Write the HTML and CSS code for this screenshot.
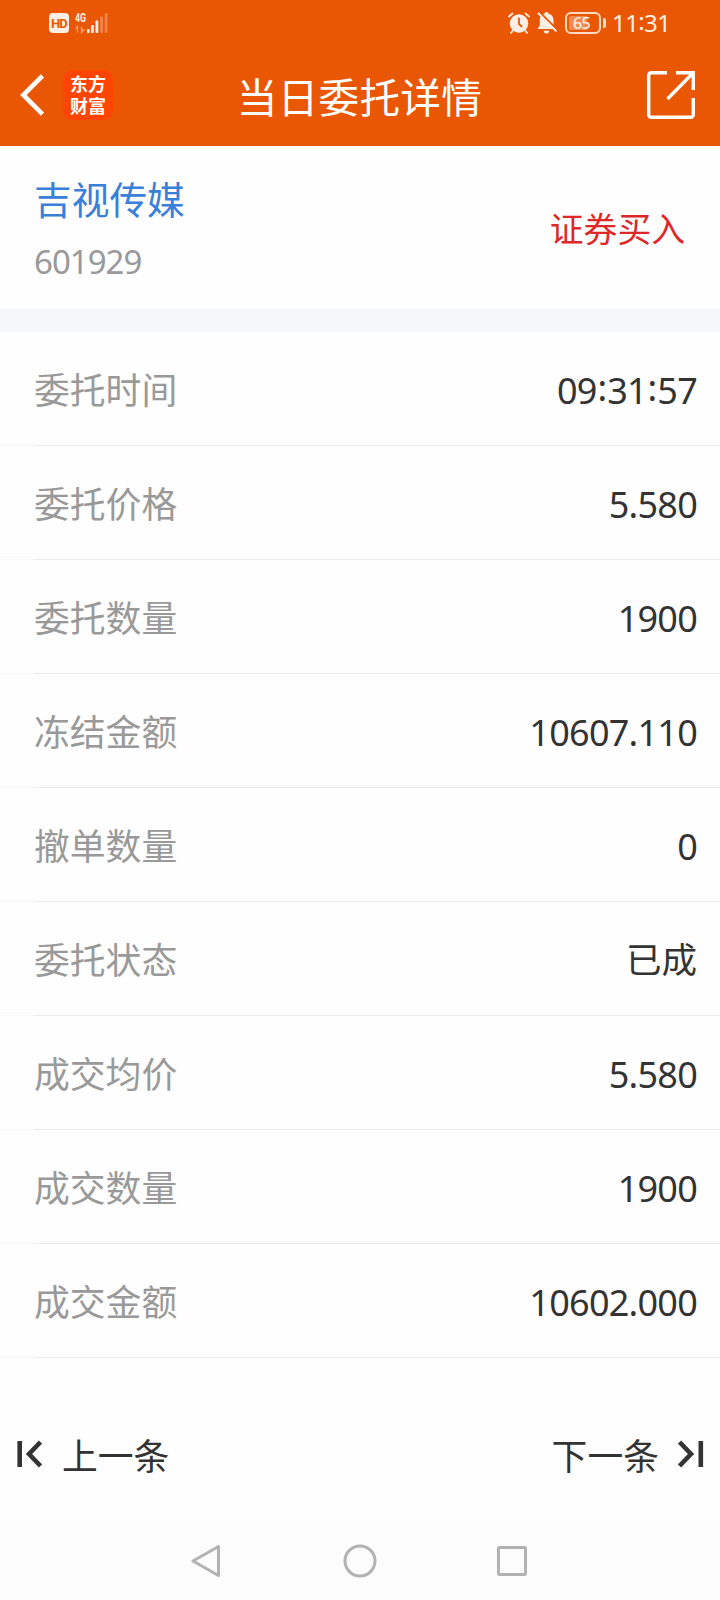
FILE: index.html
```html
<!DOCTYPE html>
<html lang="zh-CN">
<head>
<meta charset="utf-8">
<title>当日委托详情</title>
<link rel="stylesheet" href="styles.css">
</head>
<body>
<header class="top">
  <div class="status">
    <div class="status-left">
      <span class="hd">HD</span>
      <svg class="signal" width="34" height="22" viewBox="0 0 34 22" fill="#ffeee3">
        <text class="net" x="0" y="9.500" textLength="11" lengthAdjust="spacingAndGlyphs">4G</text>
        <path d="M2.500 20.500v-6l-2 2M6.500 14.500v6l2.500-2.500-2.500-1" fill="none" stroke="#ffeee3" stroke-width="1.200" opacity=".5"/>
        <rect x="12" y="17" width="2.600" height="4" rx="1"/>
        <rect x="16" y="13" width="2.800" height="8" rx="1"/>
        <rect x="20.500" y="8.500" width="2.800" height="12.500" rx="1"/>
        <rect x="25.200" y="4.500" width="2.800" height="16.500" rx="1" opacity=".3"/>
        <rect x="29.700" y="1" width="2.800" height="20" rx="1" opacity=".3"/>
      </svg>
    </div>
    <div class="status-right">
      <svg width="22" height="22" viewBox="0 0 22 22" fill="none" stroke-linecap="round">
        <circle cx="11" cy="11.500" r="9.300" fill="#ffeee3"/>
        <path d="M1 4.500L4.500 1.500M21 4.500L17.500 1.500M4.500 19L3 20.800M17.500 19l1.500 1.800" stroke="#ffeee3" stroke-width="1.800"/>
        <path d="M11 6.500v5.500l2.500 2.500" stroke="#ea5704" stroke-width="1.800"/>
      </svg>
      <svg class="bell" width="22" height="22" viewBox="0 0 22 22">
        <path d="M10.500 0c1 0 1.700.7 1.700 1.600 3.300.7 5.300 3.200 5.300 6.400v5.500l2 3.500H1.500l2.300-3.500V8c0-3.200 1.800-5.700 5-6.400C8.800.7 9.500 0 10.500 0zM7.800 18.700h5.400a2.700 2.700 0 0 1-5.400 0z" fill="#ffeee3"/>
        <path d="M3.500 0L22 18.500" stroke="#ea5704" stroke-width="2"/>
        <path d="M2 1L20.500 19.500" stroke="#ffeee3" stroke-width="1.800"/>
      </svg>
      <div class="battery"><span class="charge">65</span></div>
      <span class="clock">11<i class="colon-small">:</i>31</span>
    </div>
  </div>
  <div class="bar">
    <div class="bar-left">
      <svg width="25" height="42" viewBox="0 0 25 42" fill="none" stroke="#fff" stroke-width="4.600"><path d="M22.500 1.800L3.300 21l19.200 19.200"/></svg>
      <div class="logo">东方<br>财富</div>
    </div>
    <h1 class="title">当日委托详情</h1>
    <svg class="share" width="48" height="48" viewBox="0 0 48 48" fill="none" stroke="#fff" stroke-width="3.400"><path d="M20 1.700H4.200a2.500 2.500 0 0 0-2.500 2.500v39.600a2.500 2.500 0 0 0 2.500 2.500h39.600a2.500 2.500 0 0 0 2.500-2.500V27M29 1.700h17.300V19M46 2L20.500 28"/></svg>
  </div>
</header>
<section class="stock">
  <div>
    <div class="name">吉视传媒</div>
    <div class="code">601929</div>
  </div>
  <div class="side">证券买入</div>
</section>
<main class="list">
  <div class="row"><span class="label">委托时间</span><span class="value">09<i class="colon">:</i>31<i class="colon">:</i>57</span></div>
  <div class="row"><span class="label">委托价格</span><span class="value">5.580</span></div>
  <div class="row"><span class="label">委托数量</span><span class="value">1900</span></div>
  <div class="row"><span class="label">冻结金额</span><span class="value">10607.110</span></div>
  <div class="row"><span class="label">撤单数量</span><span class="value">0</span></div>
  <div class="row"><span class="label">委托状态</span><span class="value word">已成</span></div>
  <div class="row"><span class="label">成交均价</span><span class="value">5.580</span></div>
  <div class="row"><span class="label">成交数量</span><span class="value">1900</span></div>
  <div class="row"><span class="label">成交金额</span><span class="value">10602.000</span></div>
</main>
<div class="pager">
  <div class="page-link"><svg width="26" height="28" viewBox="0 0 26 28" fill="none" stroke="#333" stroke-width="4.600"><path d="M3.700 1v26M24.500 2L13 14l11.500 12"/></svg><span>上一条</span></div>
  <div class="page-link"><span>下一条</span><svg width="26" height="28" viewBox="0 0 26 28" fill="none" stroke="#333" stroke-width="4.600"><path d="M22.800 1v26M1.500 2L13 14 1.500 26"/></svg></div>
</div>
<nav class="nav">
  <svg width="34" height="36" viewBox="0 0 34 36"><path d="M27.500 3.500v29L2 18z"/></svg>
  <svg width="34" height="36" viewBox="0 0 34 36"><circle cx="17" cy="18" r="15"/></svg>
  <svg width="34" height="36" viewBox="0 0 34 36"><rect x="3.500" y="4.500" width="27" height="27" rx="1"/></svg>
</nav>
</body>
</html>
```
FILE: styles.css
```css
* { box-sizing: border-box; }
body {
  margin: 0;
  width: 720px;
  height: 1600px;
  display: flex;
  flex-direction: column;
  background: #fefefe;
  color: #333;
  font-family: "Noto Sans CJK SC", sans-serif;
}
svg { display: block; flex: none; }
.top { height: 146px; background: #ea5704; color: #fff; }
.status {
  height: 46px;
  padding: 0 50px 0 49px;
  display: flex;
  justify-content: space-between;
  align-items: center;
  color: #ffeee3;
}
.status-left, .status-right { display: flex; align-items: center; }
.hd {
  width: 20px;
  height: 20px;
  margin-right: 6px;
  border-radius: 4px;
  background: #ffeee3;
  color: #ea5704;
  font: bold 13px/21px Roboto, sans-serif;
  text-align: center;
  letter-spacing: -.8px;
}
.net { font: bold 12px Roboto, sans-serif; }
.bell { margin: 0 7px 0 6px; }
.battery {
  position: relative;
  width: 36px;
  height: 22px;
  padding: 3px;
  border: 2px solid #ffd9c2;
  border-radius: 6px;
}
.battery::after {
  content: "";
  position: absolute;
  left: 36px;
  top: 4px;
  width: 3px;
  height: 10px;
  border-radius: 0 2px 2px 0;
  background: #ffd9c2;
}
.charge {
  display: block;
  width: 28px;
  height: 14px;
  margin: -1px 0 0 -1px;
  border-radius: 2px;
  background: linear-gradient(90deg, #f08a52 65%, transparent 65%);
  font: 500 16px/14px "Noto Sans", sans-serif;
  letter-spacing: -.6px;
  text-align: center;
  padding-right: 3px;
}
.clock {
  width: 58px;
  margin-left: 11px;
  font: 24px/46px "Noto Sans", sans-serif;
  letter-spacing: -.6px;
  text-align: right;
}
.bar {
  height: 100px;
  padding: 0 24px 2px 20px;
  display: grid;
  grid-template-columns: 1fr auto 1fr;
  align-items: center;
}
.bar-left { display: flex; align-items: center; gap: 18px; }
.logo {
  width: 50px;
  height: 50px;
  padding-top: 2px;
  border-radius: 10px;
  background: #ff4500;
  font-size: 18px;
  font-weight: bold;
  line-height: 22px;
  text-align: center;
}
.title { margin: 2px -3px 0 0; font-size: 40.600px; font-weight: 400; line-height: 60px; letter-spacing: .3px; }
.share { justify-self: end; margin-right: 1px; }
.stock {
  height: 186px;
  padding: 22px 35px 0;
  border-bottom: 23px solid #f5f7fa;
  display: flex;
  justify-content: space-between;
}
.name { margin-left: -1px; font-size: 37.700px; line-height: 60px; color: #3880d8; }
.code { margin-left: -1px; font: 33px/68px "Noto Sans", sans-serif; letter-spacing: -1px; color: #999; }
.side { font-size: 33.800px; line-height: 120px; color: #dc2828; }
.row {
  height: 114px;
  padding: 0 23px 0 34px;
  display: flex;
  justify-content: space-between;
  line-height: 112px;
  background: linear-gradient(90deg, #f8f8f8 34px, #ebebeb 34px) bottom / 100% 1px no-repeat;
}
.label { font-size: 35.800px; color: #999; }
.value { font-family: "Noto Sans", sans-serif; font-size: 36px; line-height: 117px; letter-spacing: -.75px; }
.word { font-family: "Noto Sans CJK SC", sans-serif; font-size: 35.500px; line-height: 112px; letter-spacing: 0; }
.colon { position: relative; top: -3px; margin: 0 .8px; font-style: normal; }
.colon-small { position: relative; top: -2px; font-style: normal; }
.pager {
  height: 164px;
  padding: 56px 16px 0;
  display: flex;
  justify-content: space-between;
  align-items: flex-start;
}
.page-link { display: flex; align-items: center; gap: 19px; font-size: 35.800px; line-height: 80px; }
.page-link:first-child { gap: 20px; }
.nav {
  height: 78px;
  background: #fcfcfc;
  display: flex;
  justify-content: center;
  align-items: center;
  gap: 118px;
  fill: none;
  stroke: #b2b2b2;
  stroke-width: 3;
  stroke-linejoin: round;
}
```
